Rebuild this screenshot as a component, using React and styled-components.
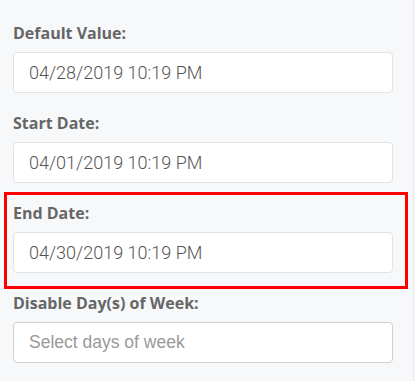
import React from 'react'
import styled, { createGlobalStyle } from 'styled-components'

const GlobalStyle = createGlobalStyle`
    html, body {
        margin: 0;
        padding: 0;
        background-color: #f7f8fa;
    }
    * {
        box-sizing: border-box;
    }
`

const Panel = styled.div`
    width: 414px;
    min-height: 381px;
    padding: 23px 0 0 13px;
    background-color: #f7f8fa;
    border-right: 1px solid #e6e8eb;
`

const Field = styled.div`
    width: 380px;
    margin-bottom: ${p => (p.$last ? '0' : '20px')};
`

const Highlight = styled.div`
    width: 404px;
    border: 3px solid #ff0000;
    margin: -11px 0 4px -9px;
    padding: 8px 0 13px 6px;
`

const Label = styled.label`
    display: block;
    font-family: "Open Sans", sans-serif;
    font-weight: 700;
    font-size: 16px;
    line-height: 20px;
    color: #666;
    margin-bottom: 9px;
`

const Input = styled.input`
    display: block;
    width: 100%;
    height: 41px;
    padding: 0 15px;
    background: #fff;
    border: 1px solid ${p => (p.$select ? '#cfcfcf' : '#e2e3e5')};
    border-radius: 4px;
    font-family: ${p => (p.$select ? '"Liberation Sans", Arial' : 'Roboto')}, sans-serif;
    font-size: ${p => (p.$select ? '17.5px' : '18px')};
    font-weight: ${p => (p.$select ? 400 : 300)};
    color: #555;
    outline: none;

    &::placeholder {
        color: #999;
    }
`

const DateField = ({ label, value }) => (
  <>
    <Label>{label}</Label>
    <Input type="text" defaultValue={value} readOnly />
  </>
)

const App = () => {
  return (
    <>
      <GlobalStyle />
      <Panel>
        <Field>
          <DateField label="Default Value:" value="04/28/2019 10:19 PM" />
        </Field>
        <Field>
          <DateField label="Start Date:" value="04/01/2019 10:19 PM" />
        </Field>
        <Highlight>
          <Field $last>
            <DateField label="End Date:" value="04/30/2019 10:19 PM" />
          </Field>
        </Highlight>
        <Field>
          <Label>Disable Day(s) of Week:</Label>
          <Input $select type="text" placeholder="Select days of week" readOnly />
        </Field>
      </Panel>
    </>
  )
}

export default App
